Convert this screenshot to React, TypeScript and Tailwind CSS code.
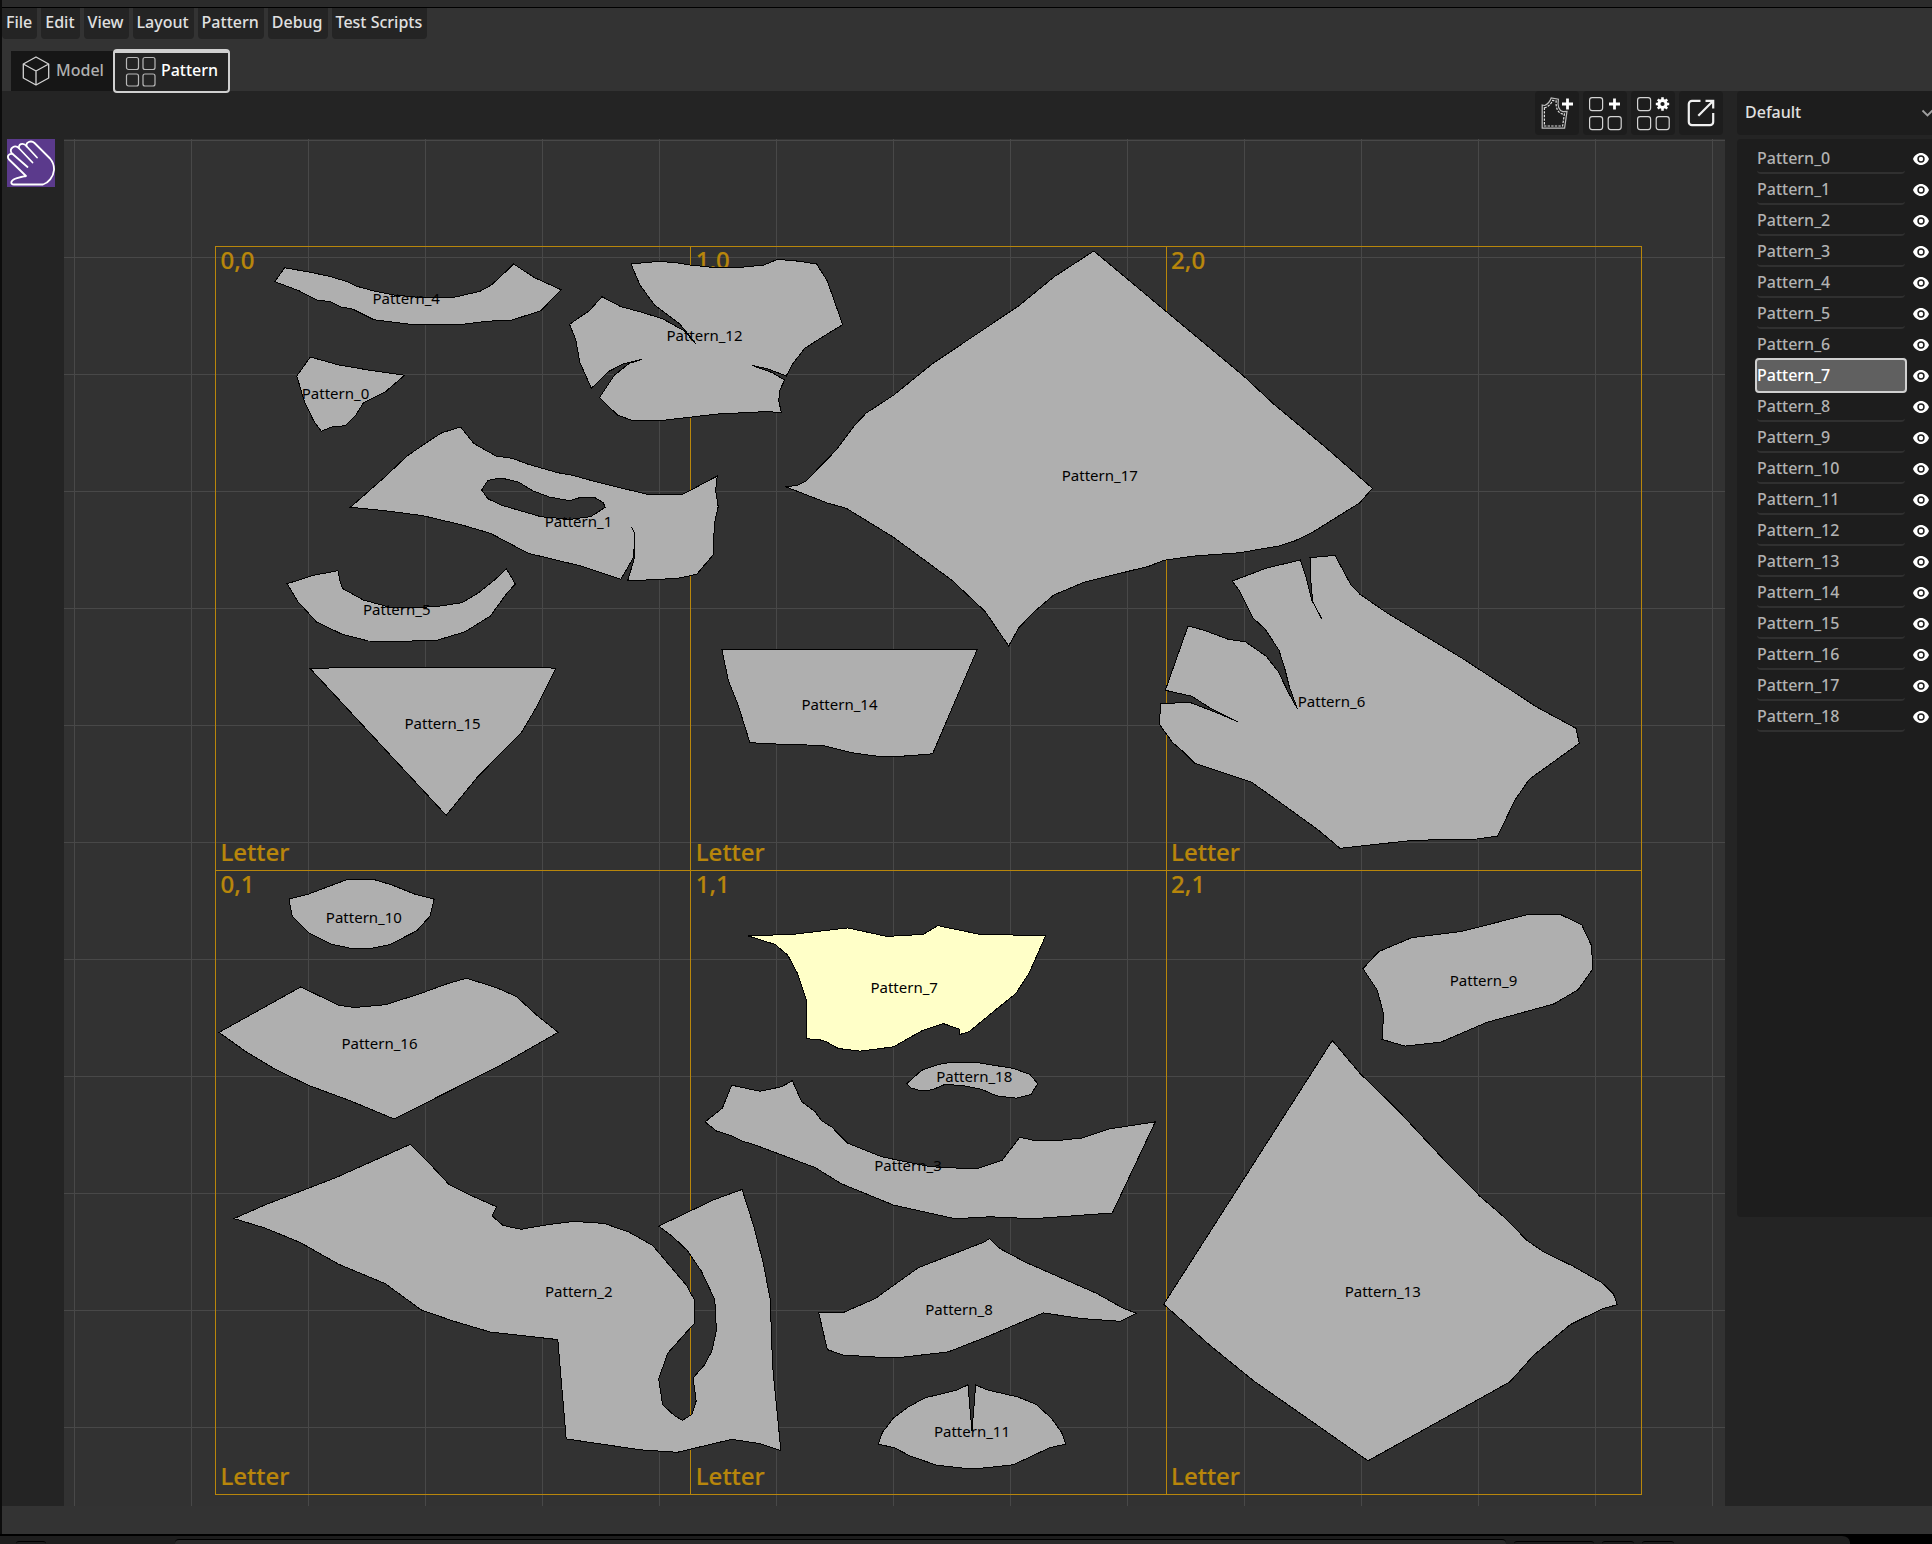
import clsx from "clsx";
import type { ReactNode } from "react";

type Piece = {
  name: string;
  label: [number, number];
  points: string;
  hole?: string;
};

const GRID = 117;
const PAN = { x: -64, y: -139 };
const SHEET = { x: 215.5, y: 246.5, width: 475.3, height: 624 };

const menus = ["File", "Edit", "View", "Layout", "Pattern", "Debug", "Test Scripts"];

const pieces: Piece[] = [
  {
    name: "Pattern_0",
    label: [335.5, 398.5],
    points:
      "310.3,357 338.9,365 368.4,370 404.6,375.3 385.2,392 363.3,403 355.7,415.3 345.6,425.7 332.6,426.7 321.2,431.3 313.6,420.7 304.4,401.7 296.8,376",
  },
  {
    name: "Pattern_1",
    label: [578.5, 527],
    points:
      "460.6,427 473.6,443.3 495.9,456 512.3,458.3 528.3,464.3 557.8,472.7 572.5,475.3 595.7,481.7 647,494.3 682.8,494.3 717.3,476 715.6,490 718.2,506.7 714.4,523.3 713.1,555 696.7,574.3 677.7,578.3 627.6,581 634.8,556.7 634.8,533.3 631.4,526.7 634.8,533.3 633.6,557.3 620.9,579.3 580.9,566 528.3,553.3 490.4,533.3 461,524.7 423,515.7 385.2,510.7 350.3,507.3 385.2,476.7 407,456 429.4,440.7 442,432.7",
    hole: "481.6,490 487.9,480.3 501.4,478 519,482.3 532.5,490.7 549.3,497 569.5,500.7 580.9,497.3 594.4,497.3 603.2,502.7 605.3,507.3 590.6,516.7 570.4,519.3 540.9,516.7 500.9,505 487.9,498.7",
  },
  {
    name: "Pattern_2",
    label: [578.8, 1297],
    points:
      "234,1218.6 265.2,1204.8 335,1178 410.4,1144.3 429.3,1163.3 449.1,1184.6 470,1195 496.6,1206.8 492.2,1215.9 502.9,1225.4 521.1,1229.3 548,1224.6 573.7,1221.4 604.1,1223.4 629,1232.1 652.7,1245.5 686.3,1285.1 694.3,1299.7 694.3,1323.4 667.8,1353.1 658.7,1378.8 662.6,1404.9 674.5,1415.5 682.4,1420.3 691.9,1414.4 696.2,1400.9 693.1,1378 704.1,1365.3 711.7,1351.5 716.4,1330.5 714.8,1299.7 701.4,1271.2 687.1,1250.3 672,1236 658.7,1226.1 714,1199.7 742.1,1189.4 753.6,1225.7 763,1262 770.2,1298.9 772.6,1366.1 780.9,1450.7 759.5,1443.6 731.8,1439.3 677.3,1452.3 640.9,1449.9 566.2,1438.9 557.8,1339.6 490.6,1332.1 453.1,1321 421.4,1310 385,1283.5 338.4,1264.1 300,1242.4 265.2,1228.1",
  },
  {
    name: "Pattern_3",
    label: [908, 1171],
    points:
      "705,1121.9 722.3,1108.2 731.7,1085.2 760,1091.3 781.7,1086.7 792.3,1080.6 801.7,1101.7 815,1111.6 821.7,1120.8 831.7,1126.9 847.3,1143 881.7,1156.8 930,1166.7 976,1169 1002.3,1160.2 1019.7,1137.2 1033.3,1140.3 1060,1140.3 1081.7,1138 1110,1128.8 1155.3,1121.9 1112.3,1213 1033.3,1218.7 990,1216.8 955,1218.7 893.3,1205 841.7,1183.9 815,1167.5 755,1144.9 742.3,1141.1 731.7,1135.7 716.7,1131.1",
  },
  {
    name: "Pattern_4",
    label: [406.2, 304],
    points:
      "284.6,267.7 310.3,272.3 329.6,276.3 348.2,282 354.9,285.7 372.6,290.7 393.6,295 423,297.7 452.5,297.7 479.9,291.3 491.3,285 498.8,278.3 513.6,264 534.6,277.7 561.1,289.7 540.9,310.7 512.3,320 486.2,321.3 457.6,325 410.4,324.3 373.8,319.7 352.4,309 341.4,307 330.5,301.7 316.6,300 298.9,290.7 274.9,281.7",
  },
  {
    name: "Pattern_5",
    label: [396.8, 615],
    points:
      "287.1,583.7 313.6,575.3 338,570.7 340.2,581.7 342.3,588.3 363.3,600 390.2,607.3 423,607.3 439.9,606 462.2,602.7 478.6,592.7 494.6,580 506.4,568.7 515.3,584 506.4,594 490.4,616 465.2,631.7 437,640.3 402,641.3 368.4,641 342.3,634.3 316.6,622 298,601.7",
  },
  {
    name: "Pattern_6",
    label: [1331.5, 707],
    points:
      "1335,555.3 1351,585 1360,594.3 1386.7,612.7 1463.3,659 1536.7,707 1576,728.3 1579.3,743.3 1529.3,779.3 1515,800 1497.7,836 1476.7,839 1413.3,840.3 1340,848.3 1318.3,830 1283.3,804.7 1251.7,782.3 1194.3,763 1183.3,751.7 1172.7,742.7 1159.3,724.3 1160.7,703.3 1190.7,702.7 1216.7,712.7 1237.7,721.7 1210,708 1192,696.3 1165.3,690.3 1188,626 1203.3,630 1228.3,639.3 1245.3,641.7 1266,656 1278.3,671.7 1288.3,692.3 1297.3,708.7 1289.3,686.7 1284.7,668.3 1279,650.3 1265,629 1253.3,618.3 1239.3,590.7 1232.3,581 1266.7,568 1300.3,560 1306,577.3 1311.7,600 1321.7,618.7 1312.7,601.7 1311,583.3 1310,557.7",
  },
  {
    name: "Pattern_7",
    label: [904.2, 993],
    points:
      "748.3,936 795,934.1 847.7,927.9 886.7,936.4 923.3,934.4 937.7,925.6 980,934.4 1045.7,935.6 1029.3,972.7 1015.7,993.7 993.3,1011.7 969.3,1031.6 959.3,1034.7 959.3,1029 943.3,1023.6 921.7,1030.9 893.3,1046.9 860,1051.1 838.3,1048.5 826.7,1042 818.3,1039.3 806.7,1038.9 806.7,1001.4 797.7,973.9 787.7,955.1 775,944.4",
  },
  {
    name: "Pattern_8",
    label: [959, 1315],
    points:
      "818.7,1312.5 843.3,1312.5 875,1298.7 918.3,1267.7 985,1241.7 989.3,1238.6 1000,1248.6 1025,1262 1096.7,1293.4 1123.3,1308.3 1136.7,1313.3 1120.7,1321.3 1081.7,1318.6 1043.3,1312.9 988.3,1336.2 948.3,1351.9 901.7,1357.3 880,1357.3 843.3,1355 827.3,1349.6 823.3,1332.4",
  },
  {
    name: "Pattern_9",
    label: [1483.5, 986],
    points:
      "1363,968.6 1378.7,951.6 1411.7,937.7 1461.7,931.4 1526.7,914.8 1559.3,914 1581.7,924.7 1591.3,945.2 1593,968.6 1578.3,989.5 1554.3,1003.8 1486.7,1022.4 1441,1042.1 1405,1046.1 1382,1039.4 1383.7,1014.4 1377.3,990.3",
  },
  {
    name: "Pattern_10",
    label: [363.9, 923],
    points:
      "289,899.1 308.7,894 346.3,879.8 374.8,879.8 391.8,884.9 415.5,894.4 434.1,899.1 430.1,916.1 416.7,930.8 389.8,944.6 372,948.2 350.3,948.2 331.3,944.2 308.7,932.8 292.1,915.8",
  },
  {
    name: "Pattern_11",
    label: [972, 1437],
    points:
      "878.3,1444.1 882.3,1432.6 893.3,1418.1 908.3,1407 925,1397.8 956.7,1390.2 968,1384.8 970,1408.9 972,1431.1 975.7,1384.8 986.7,1389.8 1018.3,1397.1 1036,1404.3 1051.7,1418.5 1061.7,1432.6 1065.7,1444.1 1050,1447.6 1013.3,1464.8 981.7,1468.2 963.3,1468.2 936.7,1465.2 910,1456 895,1448",
  },
  {
    name: "Pattern_12",
    label: [704.5, 341],
    points:
      "631,264 658.8,261.3 675.6,262.7 690.3,265 711.4,267.3 740.9,267.3 764,265 777.5,259.3 799.8,261.3 816.6,264 827.2,280.7 842.7,324.7 822.9,336.7 804.8,348.3 792.6,364 786.3,376 768.2,369 751.8,365.3 772.4,372.7 784.6,380 780,390 778.7,400.7 781.3,412.3 764,411.7 717.7,414 663,420.3 633.5,421 617.5,415 599.4,397.7 614.6,375 629.3,363.3 642.4,359.3 623,364 608.3,371.7 591.4,388.3 579.6,361.7 575.9,340 569.5,324.3 589.3,310.7 602,296.7 620.9,306.7 642,312.3 663,319 684,330.7 695.8,343.7 679.8,324 654.6,305 639.9,285",
  },
  {
    name: "Pattern_13",
    label: [1382.7, 1297],
    points:
      "1332.3,1040.5 1360,1073.4 1396.7,1109 1446.7,1162.7 1480,1196.3 1505.7,1218.5 1526.7,1240.2 1543.3,1251.7 1573.3,1266.3 1601.7,1282.5 1613.3,1293.6 1617.3,1304.7 1601.7,1309 1570,1324.8 1533.3,1355.7 1510,1381.8 1368,1460.8 1253.3,1380.6 1210,1345.4 1163.7,1304.3",
  },
  {
    name: "Pattern_14",
    label: [839.5, 710],
    points:
      "721.9,649.7 977.2,649.5 932.6,753.8 907.3,755.9 882,756.9 852.6,752.8 823,745.5 760,743.5 749.7,742.3 738.7,706.7 728.2,680",
  },
  {
    name: "Pattern_15",
    label: [442.6, 729],
    points: "309.9,668.3 372.6,667.3 538.8,667.3 556,668.3 536.7,706.7 522,731.7 477.8,776.7 446.2,815.3",
  },
  {
    name: "Pattern_16",
    label: [379.5, 1049],
    points:
      "219,1032.4 300.8,986.9 338.4,1005.1 354.2,1007.5 385.8,1004.7 421.4,993.2 447.1,983.8 466.5,978.2 496.6,987.7 516.3,996.4 536.1,1014.6 558.2,1032.4 500.5,1065.2 394.1,1119 350.3,1100.8 308.7,1085.4 275.1,1069.2 245.5,1051.4",
  },
  {
    name: "Pattern_17",
    label: [1099.8, 480.5],
    points:
      "1093.8,251 1244,376.4 1273.5,403.9 1326,447.7 1372.4,488.3 1359.8,502.8 1311.4,533 1294.5,541 1279.8,545.8 1239.8,552.7 1193.5,556.1 1164,560.3 1149.3,566.1 1084,582.3 1053.8,595 1033.6,612.3 1018.8,627.8 1008.7,646 985.2,611.6 952.3,580.6 893.4,537.2 846.3,508.3 827.3,503 785.2,486.6 797,485.5 806.3,480.7 835.8,450.4 854.7,425.3 866,413.2 893.4,395.3 932.6,363.6 976.8,334 1018.8,305.8 1054.6,276.5",
  },
  {
    name: "Pattern_18",
    label: [974.2, 1082],
    points:
      "906.7,1083.7 921.7,1070.3 938.3,1064.5 950,1062.5 975,1062.2 1013.3,1068.4 1030,1074.5 1037.7,1083.7 1031,1094.4 1016.7,1098.2 996.7,1095.9 981.7,1089.4 963.3,1085.6 945,1084.4 932.3,1089.8 921.7,1090.9 910.7,1087.9",
  },
];

const selected = "Pattern_7";

const CubeIcon = () => (
  <svg width="28" height="32" viewBox="0 0 28 32" fill="none" stroke="#d4d4d4" strokeWidth="1.3" strokeLinejoin="round">
    <path d="M14 2L26.7 9V23L14 30L1.3 23V9ZM1.3 9L14 16L26.7 9M14 16V30" />
  </svg>
);

const TilesIcon = () => (
  <svg width="32" height="32" viewBox="0 0 32 32" fill="none" stroke="#b8b8b8" strokeWidth="1.2">
    <rect x="1.5" y="1.5" width="12" height="12" rx="2" />
    <rect x="18" y="1.5" width="12" height="12" rx="2" />
    <rect x="1.5" y="18" width="12" height="12" rx="2" />
    <rect x="18" y="18" width="12" height="12" rx="2" />
  </svg>
);

const HandIcon = () => (
  <svg width="48" height="48" viewBox="0 0 48 48" fill="none" stroke="#fff" strokeWidth="1.8" strokeLinecap="round" strokeLinejoin="round">
    <path d="M30 18.5L19.8 7.5C18 3.5 24 .8 27.5 4L43 19.5C46 23 47.2 27 47 31C46.5 38 41 44 36 45.5H7C5 45.5 4 44.5 4.5 42.8C5.5 39.5 12 38.5 19 37L2 20.5C-.5 17.5 2 14 5.5 15" />
    <path d="M25.5 23.5L12.2 9.5C10.5 5.5 16 2.5 19.8 7.5" />
    <path d="M20.5 28L4.5 14C2 9 8 5 12.2 9.5" />
  </svg>
);

const SmallTiles = () => (
  <g fill="none" stroke="#d4d4d4" strokeWidth="1.2">
    <rect x="6.6" y="6.6" width="13" height="13" rx="2.5" />
    <rect x="6.6" y="25.6" width="13" height="13" rx="2.5" />
    <rect x="25.2" y="25.6" width="13" height="13" rx="2.5" />
  </g>
);

const AddPieceIcon = () => (
  <svg width="44" height="44" viewBox="0 0 44 44" fill="none">
    <path
      d="M7.2 14L9.5 14.5C13 13.2 15 10.5 16.2 7L23.4 8.2C22.4 15 24 19.8 28 20.6L32 20.4L29.6 37.2H7.2Z"
      stroke="#bdbdbd"
      strokeWidth="1.2"
    />
    <path
      d="M9.4 16.8C14 15.5 16.4 12.5 17.6 9.4L21.2 10C20.6 16.5 22.6 21.6 27 22.8L29.4 22.8L27.6 35H9.4Z"
      stroke="#e0e0e0"
      strokeWidth="1.2"
      strokeDasharray="2.4 1.2"
    />
    <path d="M32.5 7.5V18.5M27 13H38" stroke="#fff" strokeWidth="2.8" />
  </svg>
);

const AddSheetIcon = () => (
  <svg width="44" height="44" viewBox="0 0 44 44" fill="none">
    <SmallTiles />
    <path d="M31.5 7.5V18.5M26 13H37" stroke="#fff" strokeWidth="2.8" />
  </svg>
);

const SheetSettingsIcon = () => (
  <svg width="44" height="44" viewBox="0 0 44 44" fill="none">
    <SmallTiles />
    <circle cx="31.5" cy="13" r="3.6" stroke="#fff" strokeWidth="3" />
    <path
      d="M31.5 6.3V9M31.5 17V19.7M24.8 13H27.5M35.5 13H38.2M26.8 8.3L28.6 10.1M34.4 15.9L36.2 17.7M26.8 17.7L28.6 15.9M34.4 10.1L36.2 8.3"
      stroke="#fff"
      strokeWidth="2.6"
    />
  </svg>
);

const ExportIcon = () => (
  <svg width="44" height="44" viewBox="0 0 44 44" fill="none" stroke="#f0f0f0" strokeWidth="2.2">
    <path d="M21.5 9.8H13A3.2 3.2 0 0 0 9.8 13V31A3.2 3.2 0 0 0 13 34.2H31A3.2 3.2 0 0 0 34.2 31V22" />
    <path d="M19.3 24.8L34 10M26.5 9.8H34.2V17.5" />
  </svg>
);

const EyeIcon = () => (
  <svg width="16" height="16" viewBox="0 0 16 16" fill="#fff">
    <path
      fillRule="evenodd"
      d="M8 2C4.600 2 1.300 4.500 0 8C1.300 11.500 4.600 14 8 14S14.700 11.500 16 8C14.700 4.500 11.400 2 8 2ZM8 4.300A3.700 3.700 0 1 1 8 11.700A3.700 3.700 0 1 1 8 4.300Z"
    />
    <circle cx="8" cy="8" r="2.200" />
  </svg>
);

const ToolButton = ({ label, children }: { label: string; children: ReactNode }) => (
  <button type="button" aria-label={label} className="h-11 w-11 rounded bg-[#1d1d1d]">
    {children}
  </button>
);

const toPath = (points: string) => `M${points.split(" ").join("L")}Z`;

const Sheet = ({ col, row }: { col: number; row: number }) => {
  const x = SHEET.x + col * SHEET.width;
  const y = SHEET.y + row * SHEET.height;
  return (
    <g>
      <rect x={x} y={y} width={SHEET.width} height={SHEET.height} fill="none" stroke="#b8860b" shapeRendering="crispEdges" />
      <g fill="#b8860b" stroke="#b8860b" strokeWidth="0.2" className="text-2xl">
        <text x={x + 5} y={y + 22}>
          {col},{row}
        </text>
        <text x={x + 5} y={y + SHEET.height - 10}>
          Letter
        </text>
      </g>
    </g>
  );
};

const Canvas = () => (
  <svg className="block min-h-0 min-w-0 flex-1 bg-[#323232]" role="img" aria-label="Pattern layout">
    <defs>
      <pattern id="grid" x="10" y="1" width={GRID} height={GRID} patternUnits="userSpaceOnUse">
        <path d={`M.5 0V${GRID}M0 .5H${GRID}`} stroke="#484848" />
      </pattern>
    </defs>
    <rect width="100%" height="100%" fill="url(#grid)" />
    <g transform={`translate(${PAN.x} ${PAN.y})`}>
      {[0, 1].map((row) => [0, 1, 2].map((col) => <Sheet key={`${col},${row}`} col={col} row={row} />))}
      {pieces.map((piece) => (
        <g key={piece.name}>
          <path
            d={toPath(piece.points) + (piece.hole ? toPath(piece.hole) : "")}
            fill={piece.name === selected ? "#ffffc8" : "#afafaf"}
            fillRule="evenodd"
            stroke="#000"
            shapeRendering="crispEdges"
          />
          <text x={piece.label[0]} y={piece.label[1]} textAnchor="middle" className="text-[15px] font-normal">
            {piece.name}
          </text>
        </g>
      ))}
    </g>
  </svg>
);

const PieceList = () => (
  <ul className="flex-26 rounded-l bg-[#1d1d1d] pt-1 pl-5">
    {pieces.map(({ name }) => (
      <li key={name} className="flex h-[31px] items-center gap-2">
        <button
          type="button"
          className={clsx(
            "rounded-sm text-left",
            name === selected
              ? "-mx-0.5 h-[35px] w-[152px] border-2 border-[#d0d0d0] bg-[#606060] pb-0.5 text-white"
              : "h-[31px] w-[148px] border-b-2 border-[#303030] text-[#b2b2b2]"
          )}
        >
          {name}
        </button>
        <button type="button" aria-label={`Toggle ${name}`}>
          <EyeIcon />
        </button>
      </li>
    ))}
  </ul>
);

const App = () => {
  return (
    <div className="flex min-h-screen flex-col overflow-hidden bg-[#161616] font-['Noto_Sans',sans-serif] text-base font-medium text-[#e0e0e0]">
      <div className="flex flex-1 flex-col border-l-2 border-[#0c0c0c] bg-[#333]">
        <div className="h-2 border-b border-black bg-[#2b2b2b]" />
        <nav className="flex gap-1">
          {menus.map((menu) => (
            <button key={menu} type="button" className="h-[31px] rounded-b bg-[#242424] pr-[5px] pb-1 pl-1">
              {menu}
            </button>
          ))}
        </nav>
        <div className="flex items-start pt-2.5 pl-[9px]">
          <button type="button" className="mt-0.5 flex h-10 items-center gap-1.5 bg-[#161616] pr-[9px] pl-[11px] text-[#b0b0b0]">
            <CubeIcon />
            <span className="pb-0.5">Model</span>
          </button>
          <button
            type="button"
            className="relative -mb-0.5 flex h-11 items-center gap-1 rounded border-2 border-t-4 border-[#d0d0d0] bg-[#242424] px-[10px] text-white"
          >
            <TilesIcon />
            <span className="pb-1">Pattern</span>
          </button>
        </div>
        <div className="flex flex-1 bg-[#242424]">
          <main className="flex min-w-0 flex-1 flex-col">
            <div className="flex h-12 justify-end gap-1 pr-0.5">
              <ToolButton label="Add piece">
                <AddPieceIcon />
              </ToolButton>
              <ToolButton label="Add sheet">
                <AddSheetIcon />
              </ToolButton>
              <ToolButton label="Sheet settings">
                <SheetSettingsIcon />
              </ToolButton>
              <ToolButton label="Export">
                <ExportIcon />
              </ToolButton>
            </div>
            <div className="flex flex-1">
              <div className="w-[62px] pl-[5px]">
                <button type="button" aria-label="Pan" className="h-12 w-12 bg-[#5b3a8c]">
                  <HandIcon />
                </button>
              </div>
              <Canvas />
            </div>
          </main>
          <aside className="flex w-[207px] flex-col overflow-hidden pl-3">
            <div className="relative mb-1">
              <select aria-label="Layout" className="h-11 w-full appearance-none rounded-l bg-[#1d1d1d] pb-0.5 pl-2">
                <option>Default</option>
              </select>
              <svg className="pointer-events-none absolute top-4 -right-0.5" width="14" height="12" viewBox="0 0 14 12">
                <path d="M2.500 3.500L7.500 8.500L12.500 3.500" fill="none" stroke="#a0a0a0" strokeWidth="1.800" />
              </svg>
            </div>
            <PieceList />
            <div className="flex-7" />
          </aside>
        </div>
        <div className="h-7" />
      </div>
      <div className="flex h-2.5 bg-black">
        <div className="flex flex-1 items-end gap-2 rounded-tr-lg border-t-2 border-black bg-[#1e1e1e] pl-4">
          <div className="mr-[121px] h-[3px] w-[30px] rounded-t border-t border-black" />
          <div className="h-[5px] flex-1 rounded-t border-t border-black bg-[#2a2a2a]" />
          <div className="h-[3px] w-20 rounded-t border-t border-black" />
          <div className="h-[3px] w-8 rounded-t border-t border-black" />
          <div className="mr-44 h-[3px] w-8 rounded-t border-t border-black" />
        </div>
        <div className="w-[82px]" />
      </div>
    </div>
  );
};

export default App;
